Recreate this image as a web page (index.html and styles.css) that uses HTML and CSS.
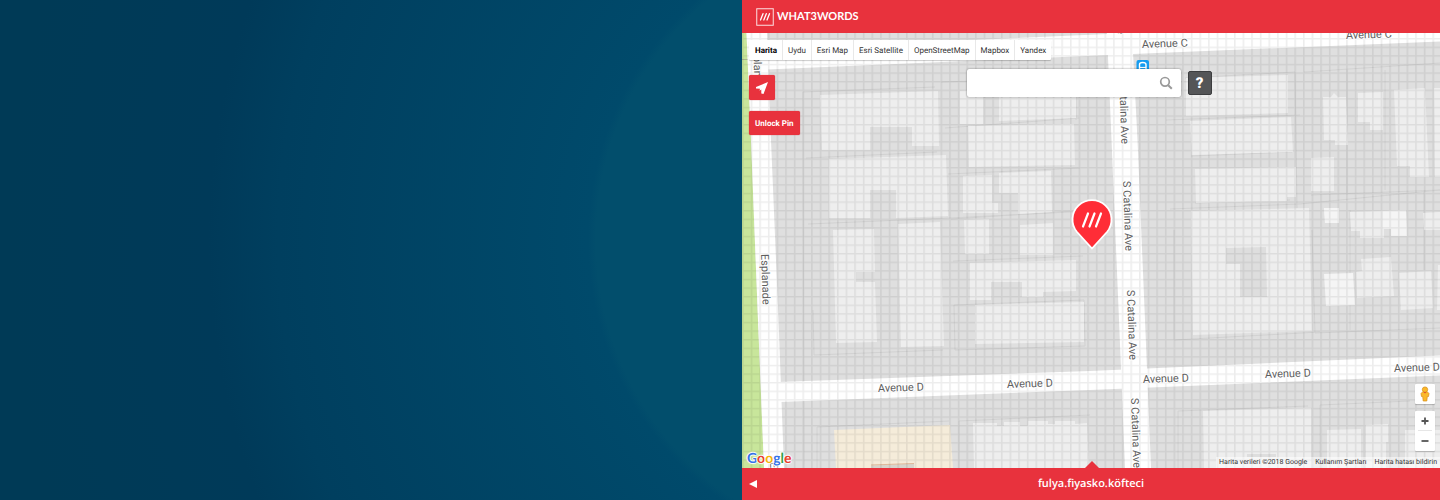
FILE: index.html
```html
<!DOCTYPE html>
<html lang="tr">
<head>
<meta charset="utf-8">
<meta name="viewport" content="width=device-width, initial-scale=1">
<title>what3words</title>
<link rel="stylesheet" href="styles.css">
</head>
<body>
<div class="page">
  <div class="backdrop"></div>
  <main class="app">
    <header class="topbar">
      <a class="brand" href="#">
        <svg class="brand-mark" viewBox="0 0 18 18" aria-hidden="true"><rect x=".75" y=".75" width="16.5" height="16.5" fill="none" stroke="#fff" stroke-opacity=".85"/><path d="M4.500 12 7 5.700M7.800 12l2.500-6.300M11 12l2.500-6.300" stroke="#fff" stroke-width="1.300" stroke-linecap="round"/></svg>
        <span class="brand-name">WHAT3WORDS</span>
      </a>
    </header>

    <section class="map" aria-label="Harita">
      <svg class="map-art" viewBox="742 33 698 435" preserveAspectRatio="xMidYMid slice">
        <defs>
          <pattern id="grid" x="785.2" y="141.2" width="8.63" height="8.6" patternUnits="userSpaceOnUse">
            <path d="M0 .8H8.63M.8 0V8.6" stroke="#000" stroke-opacity=".07" stroke-width="1.5"/>
          </pattern>
        </defs>
        <rect x="742" y="33" width="698" height="435" fill="#dfdfdf"/>

        <g fill="none" stroke="#d2d2d2" stroke-width="1">
          <path d="M804 468 803 92 935 87M806 158 937 152M808 224 950 218 1090 211M813 310 814 355 943 350M817 468V427L949 421"/>
          <path d="M941 82 1076 78V120M945 128 1079 118M948 174 1080 168M951 219 1090 210M953 261 1083 256M954 305 1084 300 1085 346 955 350ZM959 468V421L1090 415"/>
          <path d="M1166 120 1300 115M1191 156 1292 152M1195 203 1290 200M1170 209 1300 204 1440 190M1174 230 1174 340 1320 332M1185 78 1295 72 1297 208M1304 72 1440 63M1347 70V195M1385 70V190M1311 195 1440 190M1312 230 1315 333 1440 328M1350 210V330M1424 190V270M1178 411 1308 406M1178 411V468M1320 468V405L1410 401"/>
        </g>

        <g fill="#eeeeee">
          <path d="M820 95 938 91 939 146H912V127H870V150H822Z"/>
          <path d="M829 159 946 155 948 216 896 218V190H870V218H829Z"/>
          <path d="M833 230 874 229 875 272H856V282H875L877 342 836 343Z"/>
          <path d="M898 224 940 222 944 346 901 347Z"/>
          <path d="M960 91 983 90V124H960Z"/>
          <path d="M999 90 1076 87V118L999 121Z"/>
          <path d="M968 126 1074 124 1075 165 969 167Z"/>
          <path d="M963 176 992 175V203H998V213H963Z"/>
          <path d="M999 173 1051 171 1052 212 1018 214V193H999Z"/>
          <path d="M964 220 989 219V254H965Z"/>
          <path d="M1020 225 1053 223V255H1020Z"/>
          <path d="M970 263 1076 260V291L1043 292V297H1022V282H991V300H970Z"/>
          <path d="M975 305 1084 302V342L975 344Z"/>
          <path d="M973 428V423H997V426H1004V422H1020V426H1028V421H1048V424H1055V421H1075V424L1087 423 1089 468H974Z"/>
          <path d="M1186 78 1288 75V113L1186 116Z"/>
          <path d="M1190 121 1291 117 1293 152 1192 155Z"/>
          <path d="M1195 169 1296 167V197H1287V201L1196 203Z"/>
          <path d="M1191 211 1309 208 1312 331 1193 335Z"/>
          <path d="M1203 411 1311 408V468H1204Z"/>
          <path d="M1323 97H1331L1334 93 1338 97H1346L1348 145H1335V140H1324Z"/>
          <path d="M1358 93 1383 92V130H1370V122H1358Z"/>
          <path d="M1394 90 1425 88 1429 177H1410V166H1397Z"/>
          <path d="M1434 88H1440V177H1435Z"/>
          <path d="M1311 158 1334 157V191H1311Z"/>
          <path d="M1324 208H1339V223H1325Z"/>
          <path d="M1350 212 1406 210 1407 236H1391V229H1384V238H1360V231H1351Z"/>
          <path d="M1423 213 1440 212V230H1424Z"/>
          <path d="M1361 259 1391 257 1394 296 1357 298 1356 272 1362 271Z"/>
          <path d="M1399 273 1431 271 1433 308 1401 310Z"/>
          <path d="M1438 265H1440V310H1437Z"/>
          <path d="M1327 430 1361 429V468H1327Z"/>
          <path d="M1366 425 1388 424V442H1386V468H1366Z"/>
          <path d="M1405 430H1440V468H1405Z"/>
        </g>
        <g fill="#f5f5f5">
          <path d="M1324 274 1353 273 1355 305 1326 306Z"/>
          <path d="M1383 211 1406 211 1407 236H1391V229H1383Z"/>
          <path d="M1324 208H1339V223H1325Z"/>
        </g>
        <path d="M1226 248 1266 247 1267 297H1240V264H1226Z" fill="#dedede"/>
        <path d="M834 430 950 425 953 468H836Z" fill="#f5ecda"/>
        <path d="M871 465.500 914 463.500V468H871Z" fill="#d8d4cc"/>
        <path d="M871 465 914 463.500" stroke="#e0b99b"/>
        <path d="M1247 454H1276V457H1247Z" fill="#dedede"/>

        <path d="M742 33H746.500L751 140 758 320 764 468H742Z" fill="#c8e69b"/>
        <path d="M742 59.500H748" stroke="#aab58e"/>
        <g fill="#fff">
          <path d="M746.500 33H767L771 140 778.500 320 784 468H764L758 320 751 140Z"/>
          <path d="M766 49 1130 33H1440V41.500L1133 54 767 69.500Z"/>
          <path d="M1107 33H1132L1137.500 140 1145 320 1151 468H1125L1119 320 1111.500 140Z"/>
          <path d="M778 382 1090 371 1440 355.500V375.500L1090 390 780 402Z"/>
        </g>
        <rect x="742" y="33" width="698" height="435" fill="url(#grid)"/>

        <g class="street">
          <text transform="translate(1142 48) rotate(-2)">Avenue C</text>
          <text transform="translate(1346 39) rotate(-2)">Avenue C</text>
          <text transform="translate(878 392) rotate(-2)">Avenue D</text>
          <text transform="translate(1007 388) rotate(-2)">Avenue D</text>
          <text transform="translate(1143 383) rotate(-2)">Avenue D</text>
          <text transform="translate(1265 378) rotate(-2)">Avenue D</text>
          <text transform="translate(1394 372) rotate(-2)">Avenue D</text>
          <text transform="translate(753 44) rotate(88)">Esplanade</text>
          <text transform="translate(761 254) rotate(88)">Esplanade</text>
          <text transform="translate(770 462) rotate(88)">Esplanade</text>
          <text transform="translate(1115 -36) rotate(88)">S Catalina Ave</text>
          <text transform="translate(1119 74) rotate(88)">S Catalina Ave</text>
          <text transform="translate(1123 181) rotate(88)">S Catalina Ave</text>
          <text transform="translate(1127 290) rotate(88)">S Catalina Ave</text>
          <text transform="translate(1131 398) rotate(88)">S Catalina Ave</text>
        </g>

        <rect x="1136.500" y="60" width="12.500" height="13" rx="2" fill="#159cf0"/>
        <path d="M1139.500 70V64.500Q1139.500 62.500 1142.700 62.500T1146 64.500V70" fill="none" stroke="#fff" stroke-width="1.400"/>
        <path d="M1139.500 67.500H1146" stroke="#fff" stroke-width="1.200"/>

        <path d="M1092 248.500 1077 232A19.500 19.500 0 1 1 1107 232Z" fill="#ff2d37" stroke="#fff" stroke-width="1.800" stroke-linejoin="round"/>
        <path d="M1083 226.500 1088 213.500M1089.500 226.500 1094.500 213.500M1096 226.500 1101 213.500" stroke="#fff" stroke-width="2.200" stroke-linecap="round"/>
      </svg>

      <nav class="layers" aria-label="Harita katmanları">
        <button class="layer layer-on" type="button">Harita</button>
        <button class="layer" type="button">Uydu</button>
        <button class="layer" type="button">Esri Map</button>
        <button class="layer" type="button">Esri Satellite</button>
        <button class="layer" type="button">OpenStreetMap</button>
        <button class="layer" type="button">Mapbox</button>
        <button class="layer" type="button">Yandex</button>
      </nav>

      <div class="tools">
        <button class="tool tool-locate" type="button" aria-label="Konumum">
          <svg viewBox="0 0 14 14" width="14" height="14" aria-hidden="true"><path d="M13 1 8.500 13 6.300 12.600V8.500L4.500 9.800 5 7.700 1 7.500V5.900Z" fill="#fff"/></svg>
        </button>
        <button class="tool" type="button">Unlock Pin</button>
      </div>

      <form class="search-row">
        <label class="search">
          <input class="search-input" type="text" aria-label="Ara">
          <svg viewBox="0 0 14 14" width="14" height="14" aria-hidden="true"><circle cx="6" cy="5.800" r="4.300" fill="none" stroke="#999" stroke-width="1.700"/><path d="M9.200 9.200 12.800 12.800" stroke="#999" stroke-width="2"/></svg>
        </label>
        <button class="help" type="button">?</button>
      </form>

      <div class="map-controls">
        <button class="pegman" type="button" aria-label="Street View">
          <svg viewBox="0 0 10 16" width="10" height="16" aria-hidden="true"><path d="M3 5.500H7L9 7.500 8.500 10.500H7.300L6.800 15H3.200L2.700 10.500H1.500L1 7.500Z" fill="#fbb829" stroke="#d58d17" stroke-width=".7"/><circle cx="5" cy="3.600" r="2.700" fill="#fbb829" stroke="#d58d17" stroke-width=".7"/><path d="M3.400 6 5 7.400 6.600 6Z" fill="#e0532c"/></svg>
        </button>
        <div class="zoom">
          <button class="zoom-btn" type="button" aria-label="Yakınlaştır"><svg viewBox="0 0 8 8" width="8" height="8"><path d="M4 .5V7.500M.5 4H7.500" stroke="#555" stroke-width="1.800"/></svg></button>
          <button class="zoom-btn" type="button" aria-label="Uzaklaştır"><svg viewBox="0 0 8 8" width="8" height="8"><path d="M.5 4H7.500" stroke="#555" stroke-width="1.800"/></svg></button>
        </div>
      </div>

      <a class="google" href="#"><span class="g-blue">G</span><span class="g-red">o</span><span class="g-yellow">o</span><span class="g-blue">g</span><span class="g-green">l</span><span class="g-red">e</span></a>
      <div class="credits">
        <span>Harita verileri ©2018 Google</span>
        <a href="#">Kullanım Şartları</a>
        <a href="#">Harita hatası bildirin</a>
      </div>
      <div class="notch"></div>
    </section>

    <footer class="address">
      <button class="back" type="button" aria-label="Geri"><svg viewBox="0 0 8 8" width="8" height="8"><path d="M8 0V8L0 4Z" fill="#fff"/></svg></button>
      <span class="words">fulya.fiyasko.köfteci</span>
    </footer>
  </main>
</div>
</body>
</html>
```
FILE: styles.css
```css
* { box-sizing: border-box; }

body {
  margin: 0;
  font-family: Roboto, "Liberation Sans", sans-serif;
  font-size: 8px;
  color: #333;
  text-rendering: geometricPrecision;
}

button {
  margin: 0;
  padding: 0;
  border: 0;
  font: inherit;
  color: inherit;
  text-rendering: inherit;
  cursor: pointer;
}

a { color: inherit; text-decoration: none; }
svg { display: block; }

.page {
  display: grid;
  grid-template-columns: 742fr 698fr;
  min-height: 100vh;
}

.backdrop {
  background: radial-gradient(circle at 908px 48%, #024e6c 312px, #004a6b 320px, #003f5f 630px, #003a59 700px, #003a56 900px);
}

.app {
  display: flex;
  flex-direction: column;
  min-width: 0;
}

.topbar {
  display: flex;
  align-items: center;
  height: 33px;
  padding: 0 14px;
  background: #e8323d;
}

.brand {
  display: flex;
  align-items: center;
  gap: 3px;
  color: #fff;
}

.brand-mark { width: 18px; height: 18px; }

.brand-name {
  font: 700 11px/18px Lato, "Open Sans", sans-serif;
}

.map {
  position: relative;
  flex: 1;
  overflow: hidden;
  background: #dfdfdf;
}

.map-art {
  position: absolute;
  inset: 0;
  width: 100%;
  height: 100%;
}

.street {
  font-family: Roboto, sans-serif;
  font-size: 11px;
  fill: #5e5e5e;
  stroke: #fff;
  stroke-width: 2px;
  stroke-opacity: .7;
  paint-order: stroke;
}

.layers {
  position: absolute;
  top: 7px;
  left: 7px;
  display: flex;
  background: #fff;
  border-radius: 1px;
  box-shadow: 0 1px 1px rgba(0, 0, 0, .2);
}

.layer {
  height: 20px;
  padding: 0 5px;
  background: none;
  border-right: 1px solid #e8e8e8;
}

.layer:last-child { border-right: 0; }

.layer-on {
  padding-left: 6px;
  font-weight: 700;
  color: #000;
}

.tools {
  position: absolute;
  top: 42px;
  left: 7px;
  display: flex;
  flex-direction: column;
  align-items: flex-start;
  gap: 11px;
}

.tool {
  height: 24px;
  padding: 0 6px;
  border-radius: 2px;
  background: #e8323d;
  box-shadow: 0 0 1px #c01520;
  color: #fff;
  font-weight: 700;
}

.tool-locate {
  width: 26px;
  height: 25px;
}

.search-row {
  position: absolute;
  top: 36px;
  left: 0;
  right: 4px;
  display: flex;
  justify-content: center;
  align-items: center;
  gap: 7px;
  width: fit-content;
  margin: 0 auto;
}

.search {
  display: flex;
  align-items: center;
  width: 214px;
  height: 28px;
  padding-right: 8px;
  background: #fff;
  border-radius: 2px;
  box-shadow: 0 0 2px rgba(0, 0, 0, .5);
}

.search-input {
  flex: 1;
  min-width: 0;
  padding: 0 8px;
  border: 0;
  outline: 0;
  background: none;
  font: 12px Roboto, sans-serif;
}

.help {
  width: 24px;
  height: 24px;
  border: 1px solid #3c3d3f;
  border-radius: 2px;
  background: #545557;
  color: #fff;
  font-size: 15px;
  font-weight: 900;
}

.map-controls {
  position: absolute;
  right: 5px;
  bottom: 17px;
  display: flex;
  flex-direction: column;
  gap: 7px;
}

.pegman,
.zoom {
  width: 20px;
  background: #fff;
  border-radius: 1px;
  box-shadow: 0 1px 1px rgba(0, 0, 0, .2);
}

.pegman,
.zoom-btn {
  display: grid;
  place-items: center;
  height: 20px;
}

.zoom-btn {
  width: 100%;
  background: linear-gradient(#e6e6e6, #e6e6e6) center bottom / 14px 1px no-repeat;
}

.zoom-btn:last-child { background: none; }

.google {
  position: absolute;
  left: 5px;
  bottom: 1px;
  font: 14px/18px Lato, sans-serif;
  font-weight: 700;
  text-shadow: 0 0 1px #fff, 1px 0 1px #fff, -1px 0 1px #fff, 0 1px 1px #fff, 0 -1px 1px #fff;
}

.g-blue { color: #3473e8; }
.g-red { color: #e8402f; }
.g-yellow { color: #f6b50a; }
.g-green { color: #2f9f4e; }

.credits {
  position: absolute;
  right: 0;
  bottom: 0;
  display: flex;
  gap: 8px;
  padding: 0 3px;
  background: rgba(255, 255, 255, .5);
  font-size: 7px;
  line-height: 11px;
  white-space: nowrap;
}

.notch {
  position: absolute;
  left: 50%;
  bottom: 0;
  width: 14px;
  height: 7px;
  margin-left: -6px;
  background: #e8323d;
  clip-path: polygon(50% 0, 100% 100%, 0 100%);
}

.address {
  display: grid;
  grid-template-columns: 8px 1fr 8px;
  align-items: center;
  height: 32px;
  padding: 0 7px;
  background: #e8323d;
  color: #fff;
}

.back { background: none; }

.words {
  text-align: center;
  font: 600 11px/16px "Open Sans", "Noto Sans", sans-serif;
}
```
